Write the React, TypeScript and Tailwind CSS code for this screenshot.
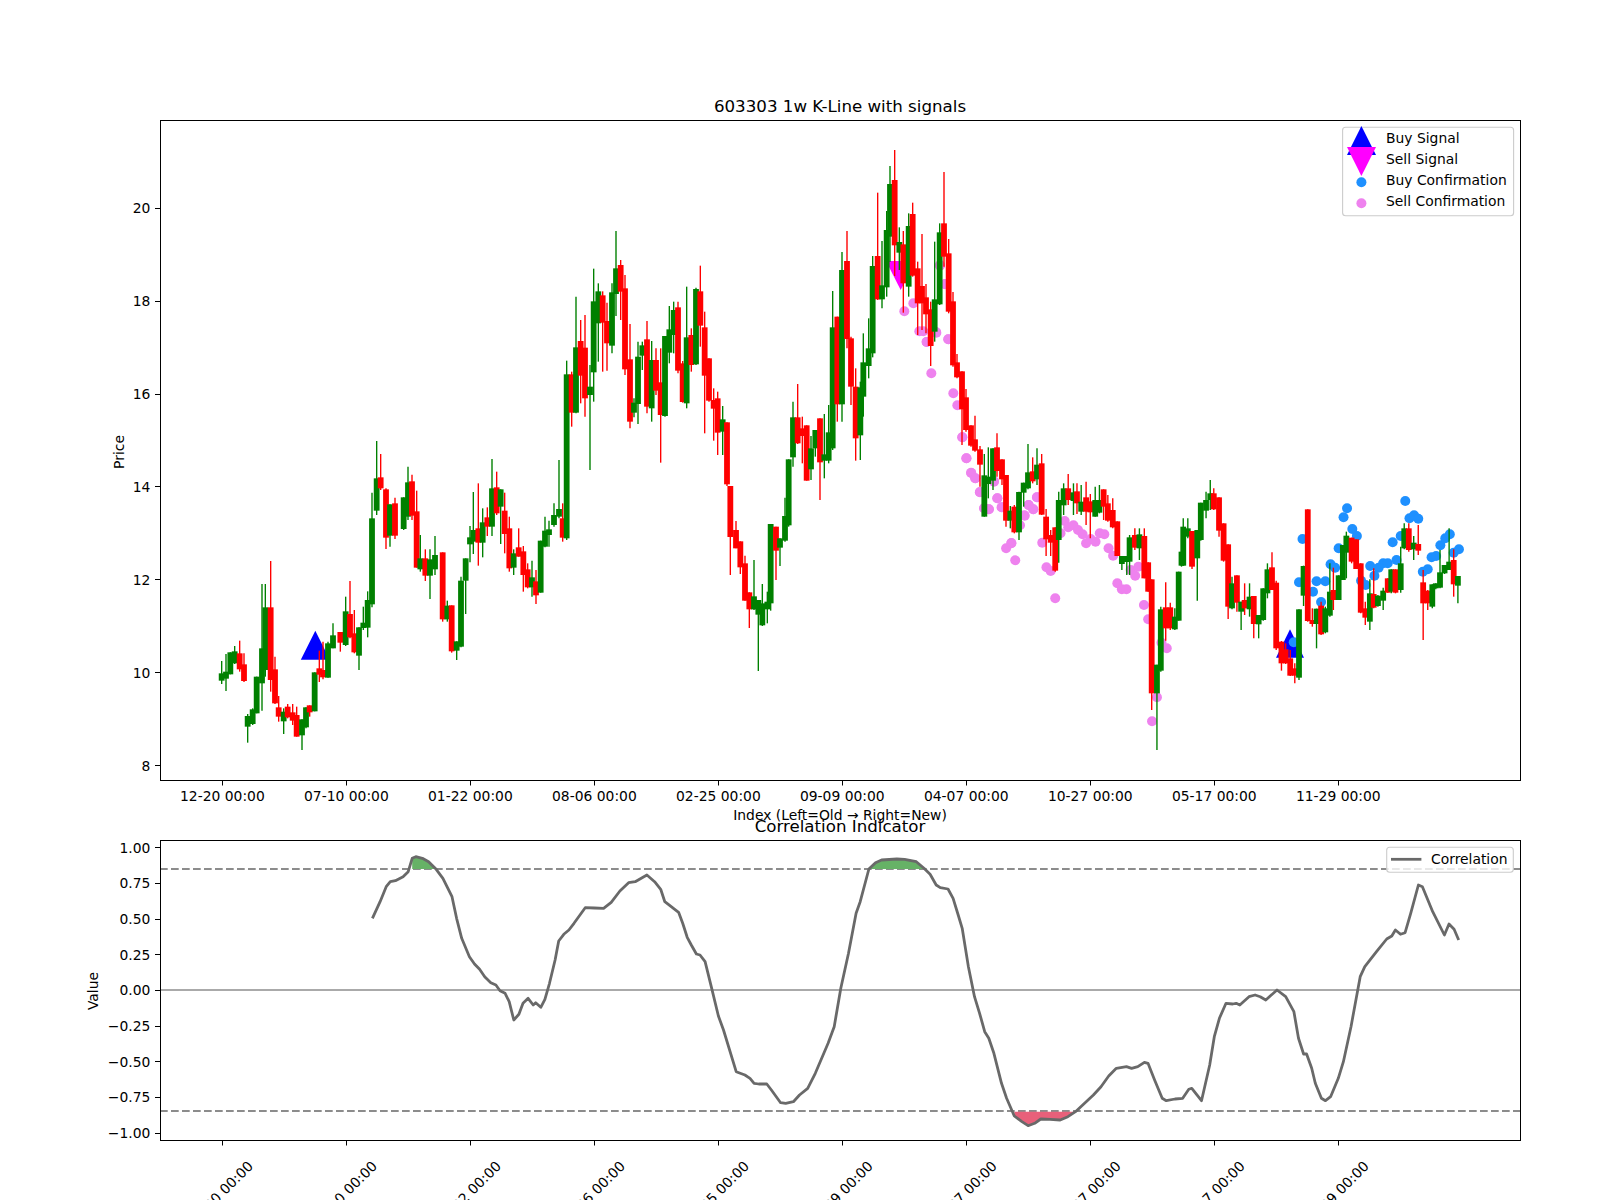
import React from "react";

type C = [number, number, number, number, number, number];
// X, isRed, bodyTop, bodyBottom, wickTop, wickBottom in the pixel space of each region
const S1: C[] = [
[215,0,820,842,783,852],[228,0,815,836,762,873],[241,0,757,823,757,823],[254,0,754,790,738,792],[269,1,760,808,722,815],[282,1,793,843,760,846],[293,0,948,980,942,1028],[308,0,928,972,925,975],[320,0,830,940,830,940],[336,0,745,850,552,932],[346,0,622,810,552,830],[362,1,622,840,483,875],[375,1,808,910,770,912],[386,1,922,950,888,965],[401,0,935,964,925,1002],[413,1,920,952,912,955],[428,1,937,962,912,975],[440,1,945,1010,920,1010],[456,0,958,1006,958,1050],[468,0,922,982,922,985],[479,1,916,937,916,950],[494,0,817,934,817,934],[508,1,805,824,752,846],[519,1,810,832,725,838],[534,0,730,833,725,833],[549,0,706,745,670,745],[571,1,696,728,696,755],[587,0,634,735,590,738],[600,1,642,712,543,715],[613,1,700,757,630,760],[627,0,682,767,682,810],[640,0,668,684,620,690],[653,0,600,683,574,712],[666,0,355,613,278,622],[680,0,235,332,123,345],[692,1,232,265,162,270],[708,1,268,413,265,447],[720,0,313,407,313,440],[735,1,310,407,293,417],[761,0,292,387,292,390],[774,0,247,350,200,360],[786,1,244,347,224,360],[800,1,334,503,272,503],[811,0,475,508,405,515],[826,1,475,527,448,543],[840,0,478,527,448,597],[855,0,465,508,408,525],[878,1,457,658,457,665],[892,0,617,658,602,665],[905,1,616,754,616,758],[920,0,724,752,724,780],[933,0,542,740,530,742],[947,0,475,542,475,642],[960,0,412,433,378,487],[970,0,390,425,276,462],[985,1,385,428,250,497],[998,0,367,428,325,472],[1012,1,352,380,322,408],[1026,0,265,380,177,408],[1040,1,262,340,215,345],[1052,0,268,320,268,432],[1064,1,332,402,278,460],[1078,1,385,505,350,515],[1091,0,460,503,448,525],[1106,1,442,470,385,470],[1120,1,454,525,438,575],[1133,1,508,562,490,565],[1146,0,532,562,482,590],[1158,1,544,586,510,612],[1172,0,422,578,422,578],[1185,0,392,440,350,442],[1197,0,388,405,362,440],
];
const S2: C[] = [
[12,0,1185,1215,1150,1220],[27,0,1167,1190,1020,1195],[38,1,1195,1253,1150,1265],[50,0,763,1255,722,1260],[65,1,763,878,755,920],[78,0,682,878,530,880],[92,1,663,767,600,850],[105,1,683,835,585,890],[120,0,800,825,735,1050],[131,0,544,757,446,845],[145,0,514,610,490,725],[158,1,526,608,514,755],[171,1,603,670,548,752],[186,0,517,677,490,700],[198,0,445,522,333,588],[212,1,435,515,420,600],[225,1,505,748,465,765],[240,1,718,905,612,925],[252,0,848,878,835,892],[264,0,710,852,665,912],[277,0,676,707,665,750],[291,1,658,860,603,880],[305,0,720,865,663,905],[318,1,720,812,685,825],[332,1,787,885,685,1028],[345,0,648,888,648,890],[358,0,628,698,558,730],[371,0,570,645,545,700],[384,1,562,752,545,760],[398,1,730,846,723,848],[410,0,652,850,500,865],[424,1,645,735,625,755],[438,0,507,733,503,735],[451,1,514,617,437,680],[464,1,622,767,575,940],[477,1,715,842,715,845],[491,1,840,866,805,962],[503,1,835,938,815,1005],[518,0,898,935,858,1005],[531,1,907,1093,907,1098],[541,1,1098,1251,1098,1365],[558,1,1230,1285,1203,1285],[571,1,1264,1342,1264,1362],[585,1,1330,1442,1307,1442],[598,1,1417,1468,1417,1524],[612,0,1429,1468,1320,1470],[625,0,1440,1484,1440,1653],[637,0,1450,1516,1392,1518],[652,0,1445,1468,1415,1510],[662,0,1212,1450,1212,1472],[678,1,1220,1292,1220,1380],[690,0,1255,1283,1255,1338],[705,0,1188,1262,1133,1265],[716,0,1018,1216,1018,1220],[729,0,892,1012,845,1040],[743,1,892,970,792,972],[757,1,925,948,890,1030],[770,1,916,1082,916,1082],[783,0,985,1048,948,1080],[796,0,930,985,930,1010],[810,1,895,1027,895,1140],[823,0,1003,1022,882,1075],[836,0,937,1022,855,1030],[848,0,622,985,513,990],[862,1,590,853,590,905],[876,0,450,853,396,905],[891,1,423,657,333,685],[903,1,655,800,650,855],[917,1,800,955,745,1022],[931,0,802,946,785,1020],
];
const S3: C[] = [
[10,0,697,800,610,860],[26,0,655,708,565,745],[38,0,408,670,378,682],[53,1,378,508,188,510],[66,0,466,508,333,535],[80,0,300,472,243,500],[90,0,162,320,108,395],[104,1,150,346,60,438],[118,0,336,368,292,420],[130,1,343,460,303,548],[146,0,288,470,250,500],[158,1,252,437,218,440],[173,1,415,520,395,615],[186,1,468,520,312,600],[198,1,502,553,462,610],[212,1,538,648,515,708],[224,0,508,605,335,635],[239,0,307,523,280,525],[252,1,280,380,126,410],[266,1,370,545,327,550],
];
const S4: C[] = [
[84,1,484,676,456,680],[96,1,667,712,642,715],[111,1,694,808,694,915],[123,1,772,870,747,875],[138,1,856,917,856,920],[150,1,898,932,827,935],[165,1,928,974,918,1040],[178,0,1006,1130,942,1130],[190,0,1010,1032,922,1075],[204,0,925,1022,925,1050],[216,1,922,993,880,1010],[231,1,958,1018,958,1035],[243,1,1005,1142,1005,1160],[256,0,1112,1142,1098,1165],[268,1,1100,1177,1095,1180],[282,0,1056,1177,1055,1200],[296,0,1028,1058,1028,1100],[309,0,997,1045,912,1048],[323,1,994,1024,952,1030],[336,0,974,1018,925,1035],[350,1,970,1124,942,1125],
];
const S5: C[] = [
[274,1,290,358,267,408],[287,1,345,368,330,408],[300,1,322,452,322,455],[310,0,240,360,215,428],[324,0,205,256,190,285],[337,1,205,240,162,255],[352,0,217,243,190,285],[362,1,214,250,190,282],[374,0,245,275,195,285],[388,1,232,275,185,315],[400,1,244,277,222,355],[414,0,240,290,200,290],[426,0,240,278,195,280],[438,1,208,260,208,300],[450,1,250,302,225,305],[464,1,270,322,235,325],[477,1,304,408,304,408],[490,0,408,432,408,450],[504,0,408,426,408,465],[512,0,352,425,345,465],[527,1,345,383,325,390],[540,0,343,385,325,420],[554,1,348,475,325,475],[565,1,427,515,427,515],[575,1,478,820,478,870],[590,0,734,820,734,990],[601,0,568,752,560,755],[615,1,562,625,487,662],[628,1,562,625,548,630],[641,0,590,628,565,630],[652,0,455,602,455,602],[660,0,395,437,395,440],[665,0,320,437,295,437],[678,0,325,350,295,355],[690,1,333,440,333,447],[705,0,330,415,330,542],[715,0,248,360,248,362],[730,0,240,272,215,295],[742,0,220,240,180,270],[752,1,220,268,205,270],[767,1,232,332,232,350],[780,1,310,422,310,425],[793,1,373,560,373,597],[804,0,490,565,470,568],[818,1,466,548,466,575],[830,0,545,575,545,630],[840,1,540,565,490,585],[854,0,530,568,490,590],[866,1,528,612,528,655],[880,0,585,613,585,655],[893,0,505,600,505,602],[905,0,448,520,430,535],[918,1,442,510,397,510],[930,1,488,685,482,690],[945,1,665,730,663,752],[957,1,688,730,670,732],[970,1,715,767,690,768],[983,1,745,767,730,790],[995,0,568,773,568,780],[1008,0,438,527,437,558],[1020,1,268,603,268,605],[1033,1,600,612,565,620],[1045,0,566,612,566,685],[1058,1,557,643,545,645],[1070,0,565,637,560,640],[1083,0,515,587,430,590],[1093,1,510,540,443,570],[1108,0,466,540,466,540],[1120,0,375,480,375,475],[1130,0,347,398,335,475],[1145,1,353,425,353,430],[1158,1,358,447,358,447],[1171,1,430,578,430,580],[1184,1,565,593,545,615],[1197,0,520,605,478,630],[1208,1,522,563,445,565],[1220,0,527,558,525,560],[1235,0,512,542,503,570],[1248,1,475,518,475,518],[1258,0,448,515,448,520],[1270,1,448,518,448,520],[1285,0,430,510,380,518],[1295,0,325,385,310,388],[1308,1,325,390,310,395],[1322,0,368,388,348,420],[1335,1,372,392,315,405],[1349,1,487,550,450,660],[1362,1,512,550,510,570],[1375,0,493,560,493,565],[1385,0,490,505,490,508],[1397,0,457,503,390,505],[1410,0,435,460,435,462],[1423,0,425,450,325,450],[1436,1,420,493,388,530],[1448,0,468,497,468,550],
];
const build = (s: C[], x0: number, xk: number, y0: number, yk: number) =>
  s.map(([x, r, t, b, wt, wb]) => ({
    x: x0 + x / xk, red: r === 1, t: y0 + t / yk, b: y0 + b / yk, wt: y0 + wt / yk, wb: y0 + wb / yk,
  }));
const candles = [
  ...build(S1, 150, 3, 400, 3),
  ...build(S2, 550, 3, 120, 3),
  ...build(S3, 860, 3, 130, 3),
  ...build(S4, 925, 3, 140, 3),
  ...build(S5, 950, 2.851, 420, 3),
];
const z5 = ([x, y]: number[]): [number, number] => [950 + x / 2.851, 420 + y / 3];
const z9 = ([x, y]: number[]): [number, number] => [925 + x / 3, 140 + y / 3];
const z10 = ([x, y]: number[]): [number, number] => [860 + x / 3, 130 + y / 3];
const violet: [number, number][] = [
  ...[[133,544],[160,520],[178,604],[190,604],[200,636],[228,606],[240,405],[255,463],[265,628]].map(z10),
  ...[[45,377],[60,432],[34,578],[5,606],[70,598],[19,700],[85,760],[97,796],[112,892],[124,955],[139,999],[151,1015],[165,1056],[178,1105],[192,1108],[207,1025],[217,1075],[231,1102],[298,1126],[285,1156],[311,1095],[325,1108],[336,1072],[259,1210]].map(z9),
  ...[[35,52],[47,115],[60,158],[72,175],[85,217],[97,265],[125,183],[110,268],[135,235],[147,262],[213,287],[197,315],[224,255],[237,268],[248,232],[263,368],[275,442],[287,453],[160,385],[175,369],[186,421],[300,535],[315,340],[327,303],[337,322],[352,316],[365,330],[378,343],[388,370],[401,357],[415,365],[427,340],[440,343],[452,385],[465,407],[477,490],[490,508],[503,508],[515,450],[528,467],[537,440],[553,555],[565,598],[603,668],[618,685],[590,832],[576,904]].map(z5),
];
const blue = [[980,667],[995,487],[1005,357],[1035,515],[1045,484],[1070,484],[1058,546],[1085,433],[1098,443],[1108,385],[1122,292],[1132,265],[1147,327],[1160,348],[1172,482],[1185,495],[1198,438],[1210,467],[1222,443],[1235,430],[1248,430],[1262,367],[1273,420],[1285,348],[1298,243],[1310,295],[1323,286],[1335,296],[1348,455],[1362,448],[1373,412],[1386,408],[1398,376],[1412,355],[1425,343],[1436,398],[1451,388]].map(z5);

const line6 = [[730,415],[745,365],[757,320],[765,305],[775,302],[790,290],[800,275],[808,235],[815,230],[828,235],[840,245],[855,268],[868,295],[886,350],[895,415],[905,475],[920,530],[930,552],[940,568],[950,590],[962,608],[972,615],[980,632],[990,640],[998,665],[1007,720],[1017,703],[1025,670],[1035,655],[1045,675],[1050,668],[1060,682],[1068,658],[1077,610],[1088,540],[1095,483],[1105,463],[1115,450],[1125,430],[1147,383],[1165,384],[1183,385],[1198,367],[1215,333],[1232,308],[1245,305],[1268,285],[1283,305],[1295,328],[1303,365],[1330,397],[1338,430],[1347,472],[1355,495],[1365,522],[1372,525],[1382,545],[1395,625],[1408,708],[1418,750],[1443,875],[1460,885],[1470,895],[1478,910],[1487,912],[1503,912],[1512,930],[1530,968],[1540,970],[1555,965]];
const line7 = [[-1,945],[15,925],[30,880],[55,790],[67,740],[80,625],[95,520],[110,400],[118,365],[135,267],[148,248],[160,240],[190,237],[205,238],[228,245],[243,265],[255,283],[267,315],[275,323],[290,327],[300,355],[310,405],[318,445],[330,560],[342,650],[352,700],[362,755],[370,775],[380,820],[395,910],[405,955],[420,1008],[435,1025],[447,1037],[460,1030],[472,1017],[490,1018],[510,1020],[525,1010],[540,995],[575,945],[590,920],[605,888],[620,865],[640,860],[650,865],[662,860],[675,847],[682,850],[695,900],[710,955],[718,962],[735,957],[750,955],[762,928],[768,925],[787,962],[803,855],[812,770],[822,715],[835,670],[848,672],[855,670],[862,675],[880,650],[892,645],[902,650],[913,660],[935,630],[952,650],[968,695],[977,775],[987,822],[993,822],[1003,865],[1010,910],[1022,955],[1030,962],[1040,950],[1055,895],[1065,845],[1080,740],[1098,590],[1107,560],[1130,515],[1150,477],[1160,468],[1167,450],[1177,463],[1186,458],[1197,400],[1212,315],[1220,320],[1240,395],[1263,465],[1272,432],[1282,448],[1291,480]];
const p6 = ([x, y]: number[]) => `${(x / 1.96).toFixed(1)},${(780 + y / 3).toFixed(1)}`;
const p7 = ([x, y]: number[]) => `${(800 + x / 1.96).toFixed(1)},${(780 + y / 3).toFixed(1)}`;
const corr = [...line6.map(p6), ...line7.map(p7)].join(" ");
const fillG1 = [[808,267],[808,235],[815,230],[828,235],[840,245],[852,267]].map(p6).join(" ");
const fillG2 = [[137,267],[148,248],[160,240],[190,237],[205,238],[228,245],[243,267]].map(p7).join(" ");
const fillR = [[420,995],[420,1008],[435,1025],[447,1037],[460,1030],[472,1017],[490,1018],[510,1020],[525,1010],[538,995]].map(p7).join(" ");

const xTicks: [number, string][] = [
  [222.4, "12-20 00:00"], [346.4, "07-10 00:00"], [470.4, "01-22 00:00"], [594.4, "08-06 00:00"], [718.4, "02-25 00:00"],
  [842.3, "09-09 00:00"], [966.3, "04-07 00:00"], [1090.3, "10-27 00:00"], [1214.3, "05-17 00:00"], [1338.3, "11-29 00:00"],
];
const priceTicks = [20, 18, 16, 14, 12, 10, 8];
const priceY = (p: number) => 208.4 + (20 - p) * 46.43;
const valueTicks: [number, string][] = [
  [1, "1.00"], [0.75, "0.75"], [0.5, "0.50"], [0.25, "0.25"], [0, "0.00"],
  [-0.25, "−0.25"], [-0.5, "−0.50"], [-0.75, "−0.75"], [-1, "−1.00"],
];
const valueY = (v: number) => 990.4 - 142.6 * v;
const crisp = (v: number) => Math.floor(v) + 0.5;
const FONT = "'DejaVu Sans', sans-serif";

export default function App() {
  return (
    <div className="w-[1600px] h-[1200px] bg-white overflow-hidden">
      <svg width={1600} height={1200} viewBox="0 0 1600 1200" className="block" fontFamily={FONT} fontSize={13.89} fill="#000">
        {/* Upper axes */}
        <text x={840} y={112} textAnchor="middle" fontSize={16.67}>603303 1w K-Line with signals</text>
        <polygon points="315.3,630.7 300.8,659.7 329.8,659.7" fill="#0000ff" />
        <polygon points="1290,629.3 1276,657.7 1304,657.7" fill="#0000ff" />
        <polygon points="886,261 915.5,261 900.7,290" fill="#ff00ff" />
        {violet.map(([x, y], i) => <circle key={i} cx={x} cy={y} r={5} fill="#ee82ee" />)}
        {blue.map(([x, y], i) => <circle key={i} cx={x} cy={y} r={5} fill="#1e90ff" />)}
        {candles.map((c, i) => {
          const col = c.red ? "#ff0000" : "#008000";
          return (
            <g key={i}>
              <line x1={c.x} x2={c.x} y1={c.wt} y2={c.wb} stroke={col} strokeWidth={1.39} />
              <rect x={c.x - 2.9} y={c.t} width={5.8} height={Math.max(c.b - c.t, 1)} fill={col} />
            </g>
          );
        })}
        <rect x={160.5} y={120.5} width={1360} height={660} fill="none" stroke="#000" strokeWidth={1} />
        {priceTicks.map((p) => (
          <g key={p}>
            <line x1={155} x2={160} y1={crisp(priceY(p))} y2={crisp(priceY(p))} stroke="#000" strokeWidth={1} />
            <text x={150.3} y={priceY(p) + 5} textAnchor="end">{p}</text>
          </g>
        ))}
        {xTicks.map(([x, s]) => (
          <g key={s}>
            <line x1={crisp(x)} x2={crisp(x)} y1={781} y2={785.5} stroke="#000" strokeWidth={1} />
            <text x={x} y={801} textAnchor="middle">{s}</text>
          </g>
        ))}
        <text transform="translate(124,452) rotate(-90)" textAnchor="middle">Price</text>
        <text x={840} y={820} textAnchor="middle">Index (Left=Old → Right=New)</text>

        {/* Upper legend */}
        <rect x={1342.6} y={127.3} width={171} height={88.4} rx={3} fill="#ffffff" fillOpacity={0.8} stroke="#cccccc" strokeWidth={1.11} />
        <polygon points="1361.4,126 1347,155 1376,155" fill="#0000ff" />
        <polygon points="1347,147 1376,147 1361.4,176" fill="#ff00ff" />
        <circle cx={1361.4} cy={182.3} r={5} fill="#1e90ff" />
        <circle cx={1361.4} cy={203.3} r={5} fill="#ee82ee" />
        <text x={1386} y={143}>Buy Signal</text>
        <text x={1386} y={164}>Sell Signal</text>
        <text x={1386} y={185}>Buy Confirmation</text>
        <text x={1386} y={206}>Sell Confirmation</text>

        {/* Lower axes */}
        <text x={840} y={832} textAnchor="middle" fontSize={16.67}>Correlation Indicator</text>
        <line x1={160} x2={1520} y1={990} y2={990} stroke="#aaaaaa" strokeWidth={2} />
        <line x1={160} x2={1520} y1={869} y2={869} stroke="#8c8c8c" strokeWidth={2.08} strokeDasharray="7.7 3.3" />
        <line x1={160} x2={1520} y1={1111} y2={1111} stroke="#8c8c8c" strokeWidth={2.08} strokeDasharray="7.7 3.3" />
        <polygon points={fillG1} fill="#66b266" />
        <polygon points={fillG2} fill="#66b266" />
        <polygon points={fillR} fill="#e8607a" />
        <polyline points={corr} fill="none" stroke="#696969" strokeWidth={2.78} strokeLinejoin="round" />
        <rect x={160.5} y={840.5} width={1360} height={300} fill="none" stroke="#000" strokeWidth={1} />
        {valueTicks.map(([v, s]) => (
          <g key={s}>
            <line x1={155} x2={160} y1={crisp(valueY(v))} y2={crisp(valueY(v))} stroke="#000" strokeWidth={1} />
            <text x={150.3} y={valueY(v) + 5} textAnchor="end">{s}</text>
          </g>
        ))}
        {xTicks.map(([x, s]) => (
          <g key={s}>
            <line x1={crisp(x)} x2={crisp(x)} y1={1141} y2={1145.5} stroke="#000" strokeWidth={1} />
            <text transform={`translate(${x - 2},1193.5) rotate(-45)`} y={5} textAnchor="middle">{s}</text>
          </g>
        ))}
        <text transform="translate(98,991) rotate(-90)" textAnchor="middle">Value</text>
        <rect x={1386.7} y={847.3} width={126.6} height={25} rx={3} fill="#ffffff" fillOpacity={0.8} stroke="#cccccc" strokeWidth={1.11} />
        <line x1={1391} x2={1421.4} y1={859.3} y2={859.3} stroke="#696969" strokeWidth={2.78} />
        <text x={1431} y={864}>Correlation</text>
      </svg>
    </div>
  );
}
